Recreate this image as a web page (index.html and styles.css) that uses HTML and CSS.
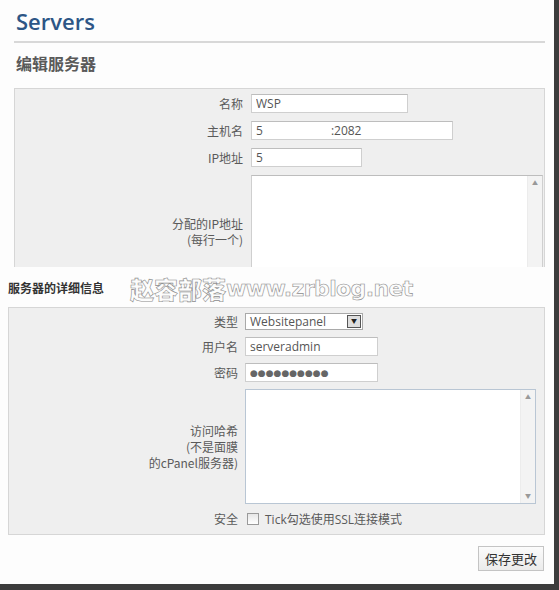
FILE: index.html
```html
<!DOCTYPE html>
<html lang="zh-CN">
<head>
  <meta charset="UTF-8"/>
  <title>Servers</title>
  <link rel="stylesheet" href="styles.css">
</head>
<body>

<div class="frame">
  <div class="top-part">
    <h1 class="page-title">Servers</h1>
    <div class="rule"></div>
    <h2 class="sub-title">编辑服务器</h2>

    <div class="form-box top-box">
      <label class="lbl" for="name">名称</label>
      <div class="cell"><input id="name" class="field w-name" type="text" value="WSP"></div>

      <label class="lbl" for="host">主机名</label>
      <div class="cell">
        <div class="field w-host host-field"><span>5</span><span class="port">:2082</span></div>
      </div>

      <label class="lbl" for="ip">IP地址</label>
      <div class="cell"><input id="ip" class="field w-ip" type="text" value="5"></div>

      <label class="lbl multi">分配的IP地址<br>(每行一个)</label>
      <div class="cell">
        <div class="area-wrap top-area">
          <textarea class="area"></textarea>
          <div class="scroll"><span class="arrow">&#9650;</span></div>
        </div>
      </div>
    </div>
  </div>

  <div class="bottom-part">
    <div class="section-head">
      <h3 class="section-title">服务器的详细信息</h3>
      <div class="watermark"><span class="wm-cn">赵容部落</span><span class="wm-en">www.zrblog.net</span></div>
    </div>

    <div class="form-box bottom-box">
      <label class="lbl">类型</label>
      <div class="cell">
        <div class="select-wrap">
          <span class="select-text">Websitepanel</span>
          <span class="select-btn">&#9660;</span>
        </div>
      </div>

      <label class="lbl" for="user">用户名</label>
      <div class="cell"><input id="user" class="field w-user" type="text" value="serveradmin"></div>

      <label class="lbl" for="pass">密码</label>
      <div class="cell"><input id="pass" class="field w-user dots" type="text" value="●●●●●●●●●●"></div>

      <label class="lbl multi">访问哈希<br>(不是面膜<br>的cPanel服务器)</label>
      <div class="cell">
        <div class="area-wrap bottom-area">
          <textarea class="area"></textarea>
          <div class="scroll both"><span class="arrow">&#9650;</span><span class="arrow">&#9660;</span></div>
        </div>
      </div>

      <label class="lbl">安全</label>
      <div class="cell check-row">
        <span class="checkbox"></span>
        <span class="check-text">Tick勾选使用SSL连接模式</span>
      </div>
    </div>

    <div class="actions">
      <button class="save-button">保存更改</button>
    </div>
  </div>
</div>

</body>
</html>
```

FILE: styles.css
```css
body {
  margin: 0;
  background-color: white;
  font-family: 'Open Sans', 'Noto Sans CJK SC', sans-serif;
  color: #555;
}

.frame {
  width: 559px;
  height: 590px;
  box-sizing: border-box;
  background-color: #fdfdfd;
  border-right: 5px solid #3c3c3c;
  border-bottom: 6px solid #3c3c3c;
  overflow: hidden;
}

.top-part {
  padding: 6px 9px 0 14px;
}

.page-title {
  margin: 0 0 0 2px;
  font-size: 22px;
  line-height: 30px;
  font-weight: 600;
  color: #2d5686;
}

.rule {
  height: 2px;
  margin-top: 5px;
  background-color: #d8d8d8;
}

.sub-title {
  margin: 8px 0 13px 2px;
  font-family: 'Noto Sans CJK SC', sans-serif;
  font-size: 16px;
  line-height: 24px;
  font-weight: bold;
  color: #5a5a5a;
}

.form-box {
  display: grid;
  grid-template-columns: 228px 1fr;
  column-gap: 8px;
  row-gap: 8px;
  align-items: center;
  background-color: #efefef;
  border: 1px solid #d6d6d6;
}

.top-box {
  height: 179px;
  padding: 5px 1px 0 0;
  border-bottom: none;
  overflow: hidden;
  box-sizing: border-box;
}

.lbl {
  text-align: right;
  font-family: 'Noto Sans CJK SC', sans-serif;
  font-size: 12px;
  line-height: 16px;
  color: #5a5a5a;
}

.cell {
  display: flex;
  align-items: center;
}

.field {
  box-sizing: border-box;
  height: 19px;
  margin: 0;
  padding: 0 4px;
  border: 1px solid #cfcfcf;
  border-top-color: #bdbdbd;
  background-color: white;
  font-family: 'Open Sans', sans-serif;
  font-size: 12px;
  color: #555;
  outline: none;
}

.w-name { width: 157px; }
.w-host { width: 202px; }
.w-ip { width: 111px; }
.w-user { width: 133px; }

.host-field {
  display: flex;
  align-items: center;
}

.port {
  margin-left: 68px;
}

.area-wrap {
  display: flex;
  box-sizing: border-box;
  border: 1px solid #cfcfcf;
  border-top-color: #bdbdbd;
  background-color: white;
}

.top-area {
  width: 292px;
  height: 114px;
}

.bottom-area {
  width: 291px;
  height: 115px;
  border-color: #b9c6d4;
}

.area {
  flex: 1;
  border: none;
  resize: none;
  outline: none;
  background-color: white;
}

.scroll {
  width: 14px;
  display: flex;
  flex-direction: column;
  align-items: center;
  background-color: #f3f3f3;
  border-left: 1px solid #ececec;
}

.scroll.both {
  justify-content: space-between;
}

.arrow {
  font-size: 6px;
  line-height: 14px;
  color: #999;
}

.bottom-part {
  padding: 0 9px 0 8px;
}

.section-head {
  display: flex;
  align-items: center;
  height: 40px;
}

.section-title {
  margin: 0;
  font-family: 'Noto Sans CJK SC', sans-serif;
  font-size: 12px;
  font-weight: bold;
  color: #333;
  width: 122px;
}

.watermark {
  display: flex;
  align-items: center;
  color: #fcfcfc;
  -webkit-text-stroke: 0.6px #8c8c8c;
  margin-top: 4px;
}

.wm-cn {
  font-family: 'Noto Sans CJK SC', sans-serif;
  font-weight: 900;
  font-size: 24px;
  line-height: 28px;
}

.wm-en {
  font-family: 'DejaVu Sans', sans-serif;
  font-weight: bold;
  font-size: 22px;
  line-height: 28px;
  letter-spacing: -0.6px;
}

.bottom-box {
  grid-template-columns: 229px 1fr;
  column-gap: 7px;
  row-gap: 7px;
  padding: 5px 0 7px 0;
}

.select-wrap {
  box-sizing: border-box;
  width: 118px;
  height: 17px;
  display: flex;
  align-items: center;
  justify-content: space-between;
  padding: 0 1px 0 4px;
  border: 1px solid #a9a9a9;
  background-color: white;
  font-size: 12px;
  color: #555;
}

.select-btn {
  box-sizing: border-box;
  width: 14px;
  height: 13px;
  border: 1px solid #555;
  background-color: #dedede;
  font-size: 6px;
  line-height: 11px;
  text-align: center;
  color: #222;
}

.dots {
  font-family: 'DejaVu Sans', sans-serif;
  font-size: 9px;
  letter-spacing: 0;
  color: #666;
}

.check-row {
  height: 15px;
}

.checkbox {
  box-sizing: border-box;
  width: 12px;
  height: 12px;
  margin-left: 2px;
  border: 1px solid #9a9a9a;
  background: linear-gradient(#e6e6e6, #fff);
}

.check-text {
  margin-left: 6px;
  font-family: 'Open Sans', 'Noto Sans CJK SC', sans-serif;
  font-size: 12px;
  color: #5a5a5a;
}

.actions {
  display: flex;
  justify-content: flex-end;
  padding-right: 1px;
  margin-top: 11px;
}

.save-button {
  width: 66px;
  height: 25px;
  padding: 0;
  border: 1px solid #c4c4c4;
  background: linear-gradient(#fbfbfb, #ebebeb);
  font-family: 'Noto Sans CJK SC', sans-serif;
  font-size: 13px;
  color: #333;
  cursor: pointer;
}
```
